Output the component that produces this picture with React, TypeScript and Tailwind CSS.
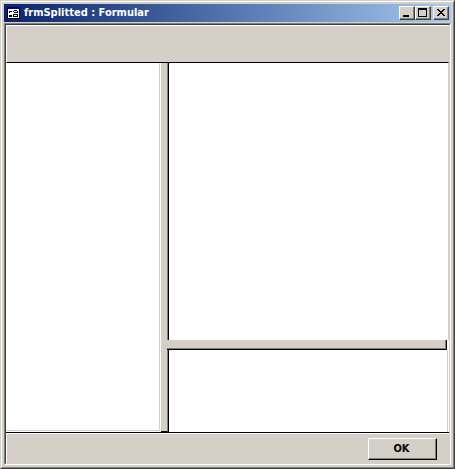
import React from "react";

const captionButton =
  "h-[14px] w-4 border border-t-white border-l-white border-r-[#404040] border-b-[#404040] bg-[#d4d0c8] shadow-[inset_-1px_-1px_0_#808080]";

function FormIcon() {
  return (
    <svg width="13" height="12" viewBox="0 0 13 12" shapeRendering="crispEdges" aria-hidden="true">
      <path fill="#fff" d="M0 2h13v10H0z" />
      <path fill="#00007b" d="M0 0h13v2H0z" />
      <path fill="#000" d="M0 2h1v10H0zM12 2h1v10h-1zM0 11h13v1H0z" />
      <path fill="#000" d="M2 4h3v1H2zM2 5h1v1H2zM2 8h3v1H2zM2 9h3v1H2z" />
      <path fill="#000" fillRule="evenodd" d="M7 3h3v1h1v2h-4v-1h-1v-1h1zM7 4v1h3v-1zM6 7h5v3H6zM7 8v1h3v-1z" />
    </svg>
  );
}

function TitleBar() {
  return (
    <header className="flex h-[18px] items-center bg-linear-to-r from-[#0a246a] to-[#a6caf0] pr-0.5 pl-[3px]">
      <FormIcon />
      <h1 className="ml-1 flex-1 text-[11px] leading-[18px] font-bold whitespace-nowrap text-white">
        frmSplitted : Formular
      </h1>
      <button type="button" aria-label="Minimize" className={captionButton}>
        <svg width="14" height="12" viewBox="0 0 14 12" shapeRendering="crispEdges">
          <path d="M3 8h6v2H3z" />
        </svg>
      </button>
      <button type="button" aria-label="Maximize" className={captionButton}>
        <svg width="14" height="12" viewBox="0 0 14 12" shapeRendering="crispEdges">
          <path fillRule="evenodd" d="M2 1h9v9H2zM3 3v6h7V3z" />
        </svg>
      </button>
      <button type="button" aria-label="Close" className={`${captionButton} ml-0.5`}>
        <svg width="14" height="12" viewBox="0 0 14 12" shapeRendering="crispEdges">
          <path d="M3 2h2v1H3zM9 2h2v1H9zM4 3h2v1H4zM8 3h2v1H8zM5 4h4v1H5zM6 5h2v1H6zM5 6h4v1H5zM4 7h2v1H4zM8 7h2v1H8zM3 8h2v1H3zM9 8h2v1H9z" />
        </svg>
      </button>
    </header>
  );
}

export default function App() {
  return (
    <div className="h-screen border border-t-[#d4d0c8] border-l-[#d4d0c8] border-r-[#404040] border-b-[#404040] font-['DejaVu_Sans_Condensed','DejaVu_Sans',sans-serif]">
      <div className="flex h-full flex-col border border-t-white border-l-white border-r-[#808080] border-b-[#808080] bg-[#d4d0c8] p-0.5">
        <TitleBar />
        <div className="mt-px flex min-h-0 flex-1 flex-col border border-t-[#808080] border-l-[#808080] border-r-white border-b-white">
          <main className="flex min-h-0 flex-1 flex-col border border-t-[#404040] border-l-[#404040] border-r-[#d4d0c8] border-b-[#d4d0c8]">
            <div className="h-[38px] border border-t-white border-l-white border-r-[#d4d0c8] border-b-black" />

            <div className="flex min-h-0 flex-1 border-b border-black bg-white">
              <section className="w-[35%] border-r border-b border-white">
                <div className="h-full border-r border-b border-[#d4d0c8]" />
              </section>
              <div className="w-[7px] border-r border-b border-r-[#808080] border-b-black bg-[#d4d0c8]" />
              <div className="flex flex-1 flex-col">
                <section className="flex-1 border-l border-black">
                  <div className="h-full border-r border-[#d4d0c8]" />
                </section>
                <div className="mr-0.5 -ml-px h-[10px] border-r border-b border-black bg-[#d4d0c8] shadow-[inset_-1px_-1px_0_#808080]" />
                <section className="h-[82px] border-l border-black pr-px">
                  <div className="h-full border-r border-[#d4d0c8]" />
                </section>
              </div>
            </div>

            <footer className="flex h-[30px] items-start justify-end border-t border-l border-white pt-1 pr-3">
              <button
                type="button"
                className="h-[22px] w-[69px] border border-t-white border-l-white border-r-black border-b-black pr-0.5 text-[11px] font-bold text-black shadow-[inset_-1px_-1px_0_#808080]"
              >
                OK
              </button>
            </footer>
          </main>
        </div>
      </div>
    </div>
  );
}
